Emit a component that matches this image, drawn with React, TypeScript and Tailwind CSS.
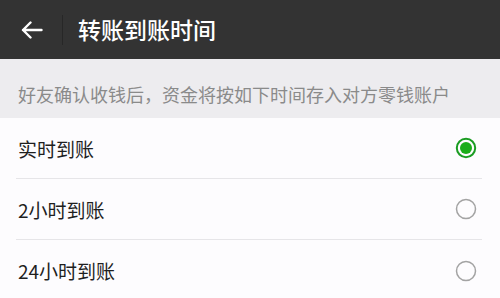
const options = [
  { label: "实时到账", checked: true },
  { label: "2小时到账", checked: false },
  { label: "24小时到账", checked: false },
];

function Radio({ checked }: { checked: boolean }) {
  return checked ? (
    <svg width="22" height="22" viewBox="0 0 22 22">
      <circle cx="11" cy="11" r="9.2" fill="none" stroke="#1a9c22" strokeWidth="2" />
      <circle cx="11" cy="11" r="6" fill="#1aad19" />
    </svg>
  ) : (
    <svg width="22" height="22" viewBox="0 0 22 22">
      <circle cx="11" cy="11" r="9.5" fill="none" stroke="#a3a3a3" strokeWidth="1.5" />
    </svg>
  );
}

export default function App() {
  return (
    <div
      className="h-[298px] w-[500px] overflow-hidden bg-[#fdfcfe]"
      style={{ fontFamily: '"Noto Sans CJK SC", "Noto Sans", sans-serif' }}
    >
      <header className="flex h-[59px] items-center bg-[#333333]">
        <div className="flex w-[62px] justify-center pl-[2px]">
          <svg width="22" height="18" viewBox="0 0 22 18" fill="none" stroke="white" strokeWidth="2.4" strokeLinecap="round" strokeLinejoin="round">
            <path d="M20.5 9H2M9.5 1.5 2 9l7.5 7.5" />
          </svg>
        </div>
        <div className="h-[30px] w-px bg-[#272727]" />
        <h1 className="ml-[15px] text-[23px] font-medium leading-none text-white">转账到账时间</h1>
      </header>

      <div className="flex h-[59px] items-center bg-[#edecef] px-[18px] pt-[10px]">
        <p className="text-[18px] leading-none text-[#8a8a8a]">好友确认收钱后，资金将按如下时间存入对方零钱账户</p>
      </div>

      <ul>
        {options.map((item, index) => (
          <li key={item.label} className="pl-[16px] pr-[18px]">
            <div
              className={`flex h-[61px] items-center justify-between pl-[2px] ${
                index < options.length - 1 ? "border-b border-[#e6e5e8]" : ""
              }`}
            >
              <span className="text-[19px] leading-none text-[#1f1f1f]">{item.label}</span>
              <span className="mr-[5px]">
                <Radio checked={item.checked} />
              </span>
            </div>
          </li>
        ))}
      </ul>
    </div>
  );
}
